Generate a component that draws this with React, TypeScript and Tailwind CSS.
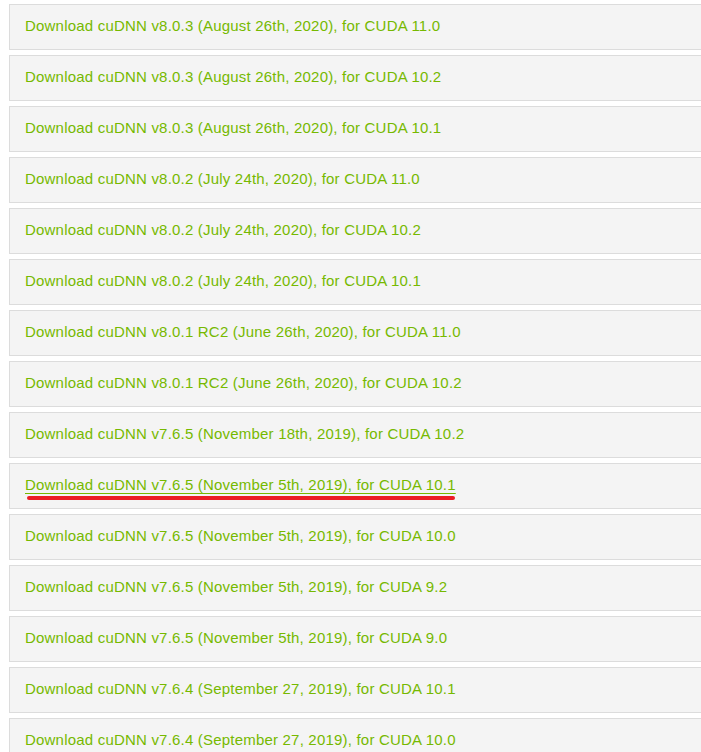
const rows = [
  "Download cuDNN v8.0.3 (August 26th, 2020), for CUDA 11.0",
  "Download cuDNN v8.0.3 (August 26th, 2020), for CUDA 10.2",
  "Download cuDNN v8.0.3 (August 26th, 2020), for CUDA 10.1",
  "Download cuDNN v8.0.2 (July 24th, 2020), for CUDA 11.0",
  "Download cuDNN v8.0.2 (July 24th, 2020), for CUDA 10.2",
  "Download cuDNN v8.0.2 (July 24th, 2020), for CUDA 10.1",
  "Download cuDNN v8.0.1 RC2 (June 26th, 2020), for CUDA 11.0",
  "Download cuDNN v8.0.1 RC2 (June 26th, 2020), for CUDA 10.2",
  "Download cuDNN v7.6.5 (November 18th, 2019), for CUDA 10.2",
  "Download cuDNN v7.6.5 (November 5th, 2019), for CUDA 10.1",
  "Download cuDNN v7.6.5 (November 5th, 2019), for CUDA 10.0",
  "Download cuDNN v7.6.5 (November 5th, 2019), for CUDA 9.2",
  "Download cuDNN v7.6.5 (November 5th, 2019), for CUDA 9.0",
  "Download cuDNN v7.6.4 (September 27, 2019), for CUDA 10.1",
  "Download cuDNN v7.6.4 (September 27, 2019), for CUDA 10.0",
];

export default function App() {
  return (
    <div className="h-[752px] overflow-hidden bg-white pl-[9px] pt-[4px] font-['Liberation_Sans',sans-serif]">
      <div className="flex flex-col gap-[5px]">
        {rows.map((label, i) => (
          <div
            key={label}
            className="flex h-[46px] items-center border border-r-0 border-[#dcdcdc] bg-[#f4f4f4] pb-[2px] pl-[15px]"
          >
            <div className="relative">
              <a
                href="#"
                className={`text-[15px] tracking-[0.2px] text-[#76b900] ${i === 9 ? "underline underline-offset-[3px]" : ""}`}
              >
                {label}
              </a>
              {i === 9 ? (
                <div className="absolute left-[2px] right-[1px] top-[23px] h-[4px] rounded-full bg-[#ec1c24]" />
              ) : null}
            </div>
          </div>
        ))}
      </div>
    </div>
  );
}
